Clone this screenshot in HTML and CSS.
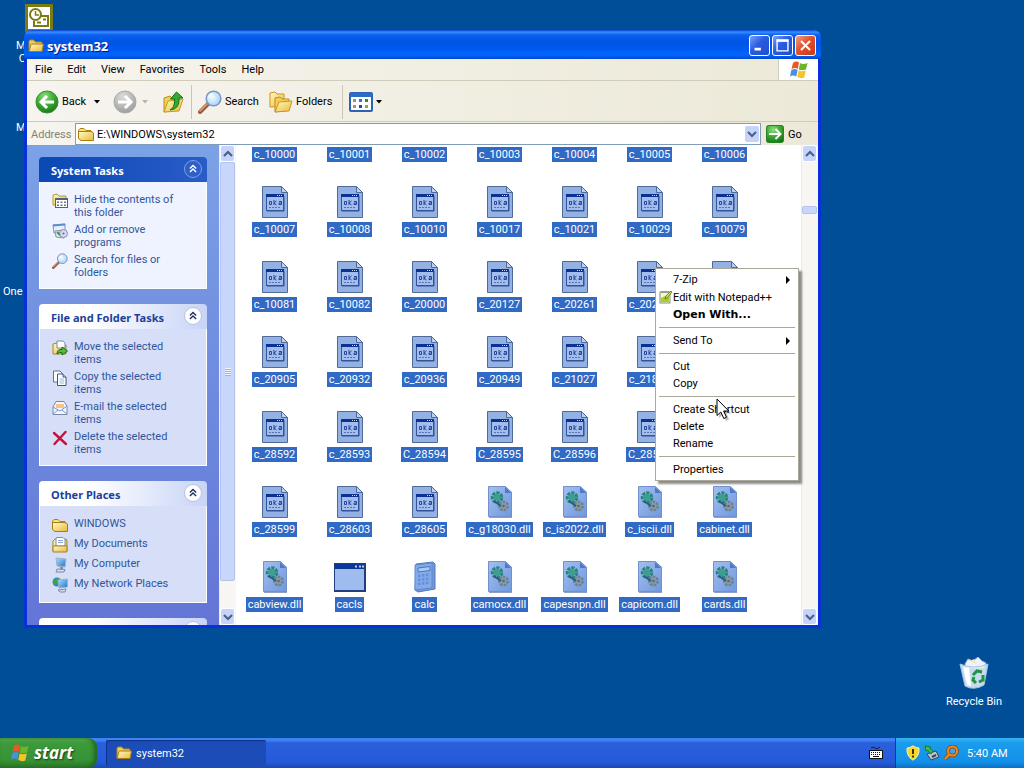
FILE: index.html
```html
<!DOCTYPE html>
<html lang="en">
<head>
  <meta charset="utf-8">
  <title>system32</title>
  <link rel="stylesheet" href="styles.css">
</head>
<body>
  <svg class="symbols" aria-hidden="true">
    <defs>
      <linearGradient id="gold" x1="0" y1="0" x2="1" y2="1">
        <stop offset="0" stop-color="#fffbc4"/>
        <stop offset="1" stop-color="#e9b93a"/>
      </linearGradient>
      <linearGradient id="page" x1="0" y1="0" x2="1" y2="1">
        <stop offset="0" stop-color="#a3bff0"/>
        <stop offset="1" stop-color="#6f98de"/>
      </linearGradient>
      <linearGradient id="screen" x1="0" y1="0" x2="1" y2="1">
        <stop offset="0" stop-color="#a5e4ff"/>
        <stop offset="1" stop-color="#2272c8"/>
      </linearGradient>
      <radialGradient id="green" cx=".4" cy=".25" r=".8">
        <stop offset="0" stop-color="#8fe07c"/>
        <stop offset=".5" stop-color="#3cab35"/>
        <stop offset="1" stop-color="#167414"/>
      </radialGradient>
      <radialGradient id="grey" cx=".4" cy=".25" r=".8">
        <stop offset="0" stop-color="#dcdcdc"/>
        <stop offset="1" stop-color="#9b9b9b"/>
      </radialGradient>
      <radialGradient id="lens" cx=".4" cy=".4" r=".7">
        <stop offset="0" stop-color="#f2fbff"/>
        <stop offset="1" stop-color="#a2cdf4"/>
      </radialGradient>
    </defs>
    <symbol id="i-folder" viewBox="0 0 16 16">
      <path d="M1 13V3.500Q1 2 2.500 2H5.500L7.500 4H13Q14 4 14 5V13Z" fill="#f0cd55" stroke="#b3861c"/>
      <path d="M1 13.500L3 6.500Q3.200 6 4 6H15.500L14 13.500Z" fill="url(#gold)" stroke="#a87b14"/>
    </symbol>
    <symbol id="i-folder-closed" viewBox="0 0 16 16">
      <path d="M.5 12V4L2 2.500H6L8 4.500H13L14 6" fill="#f7df7c" stroke="#b3861c"/>
      <path d="M.5 5.500H13L15.500 7V14.500H3L.5 12.500Z" fill="url(#gold)" stroke="#a87b14"/>
    </symbol>
    <symbol id="i-flag" viewBox="0 0 20 20">
      <path d="M4 3Q7 0.500 10 2.500L8.800 9Q6 7 2.500 9Z" fill="#e8592a"/>
      <path d="M11 3Q14 5 18.500 3L17 9.500Q13 11 9.800 9.500Z" fill="#6cb52c"/>
      <path d="M2.300 10Q6 8 8.600 10L7.300 16.500Q4 14.500 1 16.500Z" fill="#4b8fe0"/>
      <path d="M9.600 10.500Q13 12 16.800 10.500L15.300 17.500Q12 19 8.300 17Z" fill="#f6c32d"/>
    </symbol>
    <symbol id="i-back" viewBox="0 0 24 24">
      <circle cx="12" cy="12" r="11" fill="url(#green)" stroke="#3d8b38"/>
      <path d="M19 12H6M12 6L6 12L12 18" fill="none" stroke="#fff" stroke-width="3"/>
    </symbol>
    <symbol id="i-forward" viewBox="0 0 24 24">
      <circle cx="12" cy="12" r="11" fill="url(#grey)" stroke="#a9a9a9"/>
      <path d="M5 12H18M12 6L18 12L12 18" fill="none" stroke="#fff" stroke-width="3"/>
    </symbol>
    <symbol id="i-up" viewBox="0 0 24 24">
      <path d="M3 8L9 6L11 8L18 6V20L3 22Z" fill="#f3cf56" stroke="#b98d22"/>
      <path d="M3 22L7 11L22 9L18 21Z" fill="url(#gold)" stroke="#c89a28"/>
      <path d="M9 20Q14 18 13.500 9H9.500L15.500 2L22 8H18Q19 19 9 20Z" fill="#36a935" stroke="#176e19"/>
    </symbol>
    <symbol id="i-search" viewBox="0 0 24 24">
      <path d="M2 22L10 14" stroke="#9a5a3a" stroke-width="4" stroke-linecap="round"/>
      <path d="M2 21L9 14" stroke="#e2a37f" stroke-width="1.500" stroke-linecap="round"/>
      <circle cx="15.500" cy="8.500" r="7.300" fill="url(#lens)" stroke="#7a96c4" stroke-width="1.500"/>
      <path d="M11 8Q11.500 4.500 15 4" fill="none" stroke="#fff" stroke-width="1.500"/>
    </symbol>
    <symbol id="i-folders" viewBox="0 0 24 24">
      <path d="M1 17V3L6 2L8 4H15V16Z" fill="url(#gold)" stroke="#d08f23"/>
      <path d="M6 22V8L11 7L13 9H20V20Z" fill="#f4cd52" stroke="#c48a1e"/>
      <path d="M6 22L10 12L23 11L20 21Z" fill="url(#gold)" stroke="#c99429"/>
    </symbol>
    <symbol id="i-views" viewBox="0 0 24 20">
      <rect x="1" y="1" width="22" height="18" rx="1" fill="#fff" stroke="#2c63b4" stroke-width="2"/>
      <path d="M1 3H23" stroke="#2a6cc8" stroke-width="4"/>
      <path d="M4 7H7V10H4Z" fill="#8a94a8"/><path d="M10 7H13V10H10Z" fill="#3f6fbe"/><path d="M16 7H19V10H16Z" fill="#2e8b3a"/>
      <path d="M4 13H7V16H4Z" fill="#e0747c"/><path d="M10 13H13V16H10Z" fill="#1f4fa8"/><path d="M16 13H19V16H16Z" fill="#98a82c"/>
    </symbol>
    <symbol id="i-go" viewBox="0 0 18 18">
      <rect x=".5" y=".5" width="17" height="17" rx="2" fill="url(#green)" stroke="#2b8128"/>
      <path d="M3 9H14M9.500 4L14.500 9L9.500 14" fill="none" stroke="#fff" stroke-width="2"/>
    </symbol>
    <symbol id="i-down" viewBox="0 0 10 8">
      <path d="M1 2L5 6L9 2" fill="none" stroke="#4d6185" stroke-width="2.200"/>
    </symbol>
    <symbol id="i-up-chevron" viewBox="0 0 10 8">
      <path d="M1 6L5 2L9 6" fill="none" stroke="#4d6185" stroke-width="2.200"/>
    </symbol>
    <symbol id="i-collapse" viewBox="0 0 18 18">
      <path d="M5.500 8.500L9 5L12.500 8.500M5.500 12.500L9 9L12.500 12.500" fill="none" stroke="currentColor" stroke-width="1.600"/>
    </symbol>
    <symbol id="i-caret" viewBox="0 0 6 4"><path d="M0 0H6L3 3.500Z" fill="currentColor"/></symbol>
    <symbol id="i-hide" viewBox="0 0 16 16">
      <path d="M1 12V2L5 1L7 3H14V12Z" fill="url(#gold)" stroke="#b39b3a"/>
      <rect x="3.500" y="5.500" width="12" height="9" fill="#fff" stroke="#56607a"/>
      <path d="M3 6H16" stroke="#56607a" stroke-width="2"/>
      <path d="M6 8.500V10M9.500 8.500V10M13 8.500V10M6 11.500V13M9.500 11.500V13M13 11.500V13" stroke="#6a748c" stroke-width="2"/>
    </symbol>
    <symbol id="i-programs" viewBox="0 0 16 16">
      <path d="M1 2L13 1V8L2 10Z" fill="#e8eefa" stroke="#7b93c0"/>
      <path d="M1 2.500L13 1.500" stroke="#5b8fd0" stroke-width="2"/>
      <path d="M3 8L12 7V15L4 14Z" fill="#dfe6f2" stroke="#8794ac"/>
      <circle cx="11.500" cy="10.500" r="4" fill="#dcd6f2" stroke="#8d8fb5"/><circle cx="11.500" cy="10.500" r="1" fill="#667"/>
      <path d="M5 9L8 12" stroke="#3c9c4c" stroke-width="2"/>
    </symbol>
    <symbol id="i-move" viewBox="0 0 16 16">
      <path d="M1 14V4L5 3L7 5H14V14Z" fill="url(#gold)" stroke="#a3852b"/>
      <path d="M5 1H11L13 3V8H5Z" fill="#fff" stroke="#7d8cac"/>
      <path d="M5 14Q5 9 10 9.500V7L15.500 11L10 15V12.500Q7 12 5 14Z" fill="#54bd3c" stroke="#1c6c18"/>
    </symbol>
    <symbol id="i-copy" viewBox="0 0 16 16">
      <path d="M1.500 1H8L10 3V12H1.500Z" fill="#fff" stroke="#5b7196"/>
      <path d="M5.500 4H11L14 7V15.500H5.500Z" fill="#fff" stroke="#3a5884"/>
      <path d="M11 4V7H14" fill="#c9d8ee" stroke="#3a5884"/>
      <path d="M7.500 9H12M7.500 11H12M7.500 13H12" stroke="#9fb4d4"/>
    </symbol>
    <symbol id="i-mail" viewBox="0 0 16 16">
      <path d="M1 7L4 1.500H12L15 6V14.500H1Z" fill="#f3f6fd" stroke="#7b88a8"/>
      <path d="M4 4H12V8H4Z" fill="#f4c48a"/>
      <path d="M1 7L8 11L15 6M1 14L6 10M15 14L10 10" fill="none" stroke="#7f97c4"/>
    </symbol>
    <symbol id="i-delete" viewBox="0 0 16 16">
      <path d="M2 3L14 14M13.500 2L2.500 14" stroke="#c0143c" stroke-width="2.400" stroke-linecap="round"/>
    </symbol>
    <symbol id="i-documents" viewBox="0 0 16 16">
      <path d="M1 14V4L3 2H14L15 4V14Z" fill="url(#gold)" stroke="#a3852b"/>
      <path d="M5 .5H11L13 2.500V9H4V1Z" fill="#fff" stroke="#7d8cac"/>
      <path d="M6 3.500H11M6 5.500H11" stroke="#8fa8d0"/>
      <path d="M1 15V9H15V15Z" fill="url(#gold)" stroke="#a3852b"/>
    </symbol>
    <symbol id="i-computer" viewBox="0 0 16 16">
      <path d="M4 1L14 2L13 10L5 9Z" fill="url(#screen)" stroke="#9eb0cc"/>
      <path d="M8 10H11V12H8Z" fill="#8191b4"/>
      <path d="M5 12L13 12.500L12 15H4Z" fill="#d5dcea" stroke="#7d8aa8"/>
    </symbol>
    <symbol id="i-network" viewBox="0 0 16 16">
      <circle cx="5" cy="5" r="4.500" fill="#2f88c8"/>
      <path d="M1 4Q4 1 7 1L5 6L2 8Z" fill="#3da447"/>
      <path d="M6 3L15.500 2V10L7 11Z" fill="url(#screen)" stroke="#9eb0cc"/>
      <path d="M6 13L14 12L13 15H8Z" fill="#d5dcea" stroke="#7d8aa8"/>
    </symbol>
    <symbol id="i-nls" viewBox="0 0 32 32">
      <path d="M3.500 .5H22.500L28.500 6.500V31.500H3.500Z" fill="#94b1e4" stroke="#4f6a98"/>
      <path d="M22.500 .5V6.500H28.500Z" fill="#bccfee" stroke="#4f6a98"/>
      <rect x="7.500" y="8.500" width="17" height="16" fill="#a3bdec" stroke="#34559a"/>
      <path d="M7 9.500H25" stroke="#0b3292" stroke-width="3"/>
      <path d="M18 9.500H19M20 9.500H21M22 9.500H23" stroke="#cfdcf7"/>
      <path d="M25 10V25H8" fill="none" stroke="#34559a"/>
      <path d="M10.500 15.500H12.500V18.500H10.500ZM15 14V19M17.500 15L15 17L17.500 19M20 15.500H22.500V18.500H20V17H22" fill="none" stroke="#27459a"/>
      <path d="M10 21.500H22" stroke="#5674b4" stroke-dasharray="2 1"/>
    </symbol>
    <symbol id="i-dll" viewBox="0 0 32 32">
      <path d="M5 1H22L28 6V32H5Z" fill="#8fa0c4"/>
      <path d="M4.500 .5H21.500L27.500 6.500V30.500H4.500Z" fill="url(#page)" stroke="#7290cc"/>
      <path d="M21 1V7H27Z" fill="#4f79c8"/>
      <circle cx="13" cy="11.500" r="4.500" fill="none" stroke="#26857d" stroke-width="3.500" stroke-dasharray="3 1"/>
      <circle cx="13" cy="11.500" r="3.500" fill="#3e9f90"/>
      <circle cx="19.500" cy="20" r="4" fill="none" stroke="#6e8288" stroke-width="3" stroke-dasharray="2.500 1"/>
      <circle cx="19.500" cy="20" r="3" fill="#8b9a96"/>
      <circle cx="19.500" cy="20" r="1.300" fill="#4c66a6"/>
      <path d="M10 15L17 20" stroke="#285c80" stroke-width="2"/>
    </symbol>
    <symbol id="i-exe" viewBox="0 0 32 32">
      <rect x=".5" y="2.500" width="31" height="28" fill="#9fbcee" stroke="#1f3f80"/>
      <path d="M1 5.500H31" stroke="#0b3799" stroke-width="5"/>
      <path d="M21 5.500H23M25 5.500H27M28 5.500H30" stroke="#b7ccf3" stroke-width="2"/>
      <path d="M31 3V30H1" fill="none" stroke="#1f3f80" stroke-width="2"/>
    </symbol>
    <symbol id="i-calc" viewBox="0 0 32 32">
      <path d="M7 3L24 1L26 3V28L9 31L6 29Z" fill="#7598d8" stroke="#4f78c4"/>
      <path d="M6 4L23 2V27L6 29Z" fill="#84abe9" stroke="#5f88d2"/>
      <path d="M9 7L21 5.500V9.500L9 11Z" fill="#a9c8f5" stroke="#4b74c0"/>
      <path d="M9 15L21 13.500M9 19L21 17.500M9 23L21 21.500" stroke="#6490da" stroke-width="2.500" stroke-dasharray="2.500 1.500"/>
    </symbol>
    <symbol id="i-bin" viewBox="0 0 32 32">
      <path d="M7 7L10 2L15 4L20 0L24 4L28 6L26 11L8 11Z" fill="#eef2fb" stroke="#9fb4da"/>
      <path d="M12 4L16 2L19 7Z" fill="#fbe3b8"/>
      <path d="M2 7Q15 13 30 7L26 28Q16 34 7 29Z" fill="#dcebf7" fill-opacity=".9" stroke="#a9c6dd"/>
      <path d="M5 10L9 28L13 29L11 11Z" fill="#fff"/>
      <path d="M15 18L19 14L24 15M25 18V23L21 25M18 26L15 23L16 20" fill="none" stroke="#1f9440" stroke-width="3"/>
    </symbol>
    <symbol id="i-outlook" viewBox="0 0 28 28">
      <rect x="1.500" y="1.500" width="25" height="25" fill="#fff" stroke="#7c7a12" stroke-width="3"/>
      <circle cx="10.500" cy="10.500" r="5.500" fill="#fff" stroke="#7c7a12" stroke-width="2"/>
      <path d="M10.500 7V11H14" fill="none" stroke="#7c7a12" stroke-width="1.500"/>
      <path d="M15 12H23V22H9V17" fill="none" stroke="#7c7a12" stroke-width="2"/>
      <path d="M12 18.500H16M18 15.500H21" stroke="#7c7a12" stroke-width="2"/>
    </symbol>
    <symbol id="i-notepad" viewBox="0 0 14 14">
      <rect x="1" y="2" width="10" height="11" fill="#f2f7d8" stroke="#8a9070"/>
      <path d="M2 12V8L10 4V12Z" fill="#a8cf2c"/>
      <path d="M3 1V3M5 1V3M7 1V3M9 1V3" stroke="#777"/>
      <path d="M6 9L7 6L12 1L13 2L8 8Z" fill="#d9e86a" stroke="#4c5a18" stroke-width=".7"/>
    </symbol>
    <symbol id="i-keyboard" viewBox="0 0 14 14">
      <path d="M2 2Q4 0 6 2T11 1" fill="none" stroke="#0b1d50"/>
      <rect x=".5" y="4.500" width="13" height="8" fill="#fff" stroke="#111"/>
      <path d="M2 6.500H12M2 8.500H12" stroke="#111" stroke-dasharray="1 1"/>
      <path d="M4 10.500H10" stroke="#111"/>
    </symbol>
    <symbol id="i-shield" viewBox="0 0 14 16">
      <path d="M7 .8Q10 3 13 3Q14 11 7 15.200Q0 11 1 3Q4 3 7 .8Z" fill="#f8d72c" stroke="#e9ecc8"/>
      <path d="M7 4V9M7 10.500V12.500" stroke="#3b3200" stroke-width="2"/>
    </symbol>
    <symbol id="i-eject" viewBox="0 0 16 16">
      <path d="M3 9L12 6L15 12L7 15Z" fill="#b9c4d0" stroke="#35465c"/>
      <path d="M8 12L12 10" stroke="#35465c" stroke-width="2"/>
      <path d="M2 6L1 1L7 2L5.500 3.500L9 6L7 9L3.500 5Z" fill="#3fc04a" stroke="#1a7b2a"/>
    </symbol>
    <symbol id="i-finder" viewBox="0 0 16 16">
      <circle cx="9.500" cy="6" r="4.500" fill="#4aa0dc" stroke="#8e4209" stroke-width="3.400"/>
      <path d="M6 9.500L2 14" stroke="#8e4209" stroke-width="4"/>
      <circle cx="9.500" cy="6" r="4.500" fill="none" stroke="#f08b22" stroke-width="2"/>
      <path d="M6 9.500L2 14" stroke="#f08b22" stroke-width="2.400"/>
    </symbol>
  </svg>

  <main class="desktop">
    <div class="shortcut outlook">
      <svg class="shortcut-icon"><use href="#i-outlook"/></svg>
    </div>
    <div class="hidden-label label-mail">M<br>&nbsp;O</div>
    <div class="hidden-label label-music">M</div>
    <div class="hidden-label label-note">One</div>

    <a class="recycle-bin" href="#">
      <svg><use href="#i-bin"/></svg>
      <span>Recycle Bin</span>
    </a>

    <section class="window">
      <header class="title-bar">
        <svg class="icon-16"><use href="#i-folder"/></svg>
        <h1>system32</h1>
        <div class="window-buttons">
          <button class="window-btn" aria-label="Minimize">
            <svg viewBox="0 0 21 21"><path d="M5 14.500H12" stroke="#fff" stroke-width="3"/></svg>
          </button>
          <button class="window-btn" aria-label="Maximize">
            <svg viewBox="0 0 21 21"><path d="M4.500 4V16.500H16.500V4" fill="none" stroke="#fff" stroke-width="1.500"/><path d="M4 5H17" stroke="#fff" stroke-width="3"/></svg>
          </button>
          <button class="window-btn close" aria-label="Close">
            <svg viewBox="0 0 21 21"><path d="M5.500 5.500L15.500 15.500M15.500 5.500L5.500 15.500" stroke="#fff" stroke-width="2.200"/></svg>
          </button>
        </div>
      </header>

      <nav class="menu-bar">
        <button>File</button>
        <button>Edit</button>
        <button>View</button>
        <button>Favorites</button>
        <button>Tools</button>
        <button>Help</button>
        <div class="brand"><svg><use href="#i-flag"/></svg></div>
      </nav>

      <div class="toolbar">
        <button class="tool back"><svg class="icon-24"><use href="#i-back"/></svg>Back</button>
        <button class="drop" aria-label="Back history"><svg><use href="#i-caret"/></svg></button>
        <button class="tool forward" aria-label="Forward" disabled><svg class="icon-24"><use href="#i-forward"/></svg></button>
        <button class="drop" aria-label="Forward history" disabled><svg><use href="#i-caret"/></svg></button>
        <button class="tool up" aria-label="Up"><svg class="icon-24"><use href="#i-up"/></svg></button>
        <span class="divider"></span>
        <button class="tool search"><svg class="icon-24"><use href="#i-search"/></svg>Search</button>
        <button class="tool folders"><svg class="icon-24"><use href="#i-folders"/></svg>Folders</button>
        <span class="divider"></span>
        <button class="tool views" aria-label="Views"><svg class="icon-24"><use href="#i-views"/></svg><svg class="caret"><use href="#i-caret"/></svg></button>
      </div>

      <form class="address-bar">
        <label for="address">Address</label>
        <div class="address-box">
          <svg class="icon-16"><use href="#i-folder-closed"/></svg>
          <input type="text" id="address" value="E:\WINDOWS\system32">
          <button type="button" class="scroll-btn" aria-label="Address list"><svg><use href="#i-down"/></svg></button>
        </div>
        <button type="button" class="go"><svg><use href="#i-go"/></svg>Go</button>
      </form>

      <div class="content">
        <aside class="side">
          <section class="panel primary">
            <h2>System Tasks <button class="collapse" aria-label="Collapse"><svg><use href="#i-collapse"/></svg></button></h2>
            <ul>
              <li><svg class="icon-16"><use href="#i-hide"/></svg><a href="#">Hide the contents of<br>this folder</a></li>
              <li><svg class="icon-16"><use href="#i-programs"/></svg><a href="#">Add or remove<br>programs</a></li>
              <li><svg class="icon-16"><use href="#i-search"/></svg><a href="#">Search for files or<br>folders</a></li>
            </ul>
          </section>
          <section class="panel">
            <h2>File and Folder Tasks <button class="collapse" aria-label="Collapse"><svg><use href="#i-collapse"/></svg></button></h2>
            <ul>
              <li><svg class="icon-16"><use href="#i-move"/></svg><a href="#">Move the selected<br>items</a></li>
              <li><svg class="icon-16"><use href="#i-copy"/></svg><a href="#">Copy the selected<br>items</a></li>
              <li><svg class="icon-16"><use href="#i-mail"/></svg><a href="#">E-mail the selected<br>items</a></li>
              <li><svg class="icon-16"><use href="#i-delete"/></svg><a href="#">Delete the selected<br>items</a></li>
            </ul>
          </section>
          <section class="panel">
            <h2>Other Places <button class="collapse" aria-label="Collapse"><svg><use href="#i-collapse"/></svg></button></h2>
            <ul>
              <li><svg class="icon-16"><use href="#i-folder-closed"/></svg><a href="#">WINDOWS</a></li>
              <li><svg class="icon-16"><use href="#i-documents"/></svg><a href="#">My Documents</a></li>
              <li><svg class="icon-16"><use href="#i-computer"/></svg><a href="#">My Computer</a></li>
              <li><svg class="icon-16"><use href="#i-network"/></svg><a href="#">My Network Places</a></li>
            </ul>
          </section>
          <section class="panel">
            <h2><button class="collapse" aria-label="Collapse"><svg><use href="#i-collapse"/></svg></button></h2>
          </section>
        </aside>

        <div class="scrollbar side-scroll">
          <button class="scroll-btn" aria-label="Scroll up"><svg><use href="#i-up-chevron"/></svg></button>
          <div class="track"><div class="thumb"><span class="grip"></span></div></div>
          <button class="scroll-btn" aria-label="Scroll down"><svg><use href="#i-down"/></svg></button>
        </div>

        <div class="files">
          <ul class="file-grid">
            <li><svg><use href="#i-nls"/></svg><span>c_10000</span></li>
            <li><svg><use href="#i-nls"/></svg><span>c_10001</span></li>
            <li><svg><use href="#i-nls"/></svg><span>c_10002</span></li>
            <li><svg><use href="#i-nls"/></svg><span>c_10003</span></li>
            <li><svg><use href="#i-nls"/></svg><span>c_10004</span></li>
            <li><svg><use href="#i-nls"/></svg><span>c_10005</span></li>
            <li><svg><use href="#i-nls"/></svg><span>c_10006</span></li>

            <li><svg><use href="#i-nls"/></svg><span>c_10007</span></li>
            <li><svg><use href="#i-nls"/></svg><span>c_10008</span></li>
            <li><svg><use href="#i-nls"/></svg><span>c_10010</span></li>
            <li><svg><use href="#i-nls"/></svg><span>c_10017</span></li>
            <li><svg><use href="#i-nls"/></svg><span>c_10021</span></li>
            <li><svg><use href="#i-nls"/></svg><span>c_10029</span></li>
            <li><svg><use href="#i-nls"/></svg><span>c_10079</span></li>

            <li><svg><use href="#i-nls"/></svg><span>c_10081</span></li>
            <li><svg><use href="#i-nls"/></svg><span>c_10082</span></li>
            <li><svg><use href="#i-nls"/></svg><span>c_20000</span></li>
            <li><svg><use href="#i-nls"/></svg><span>c_20127</span></li>
            <li><svg><use href="#i-nls"/></svg><span>c_20261</span></li>
            <li><svg><use href="#i-nls"/></svg><span>c_20269</span></li>
            <li><svg><use href="#i-nls"/></svg></li>

            <li><svg><use href="#i-nls"/></svg><span>c_20905</span></li>
            <li><svg><use href="#i-nls"/></svg><span>c_20932</span></li>
            <li><svg><use href="#i-nls"/></svg><span>c_20936</span></li>
            <li><svg><use href="#i-nls"/></svg><span>c_20949</span></li>
            <li><svg><use href="#i-nls"/></svg><span>c_21027</span></li>
            <li><svg><use href="#i-nls"/></svg><span>c_21866</span></li>
            <li></li>

            <li><svg><use href="#i-nls"/></svg><span>c_28592</span></li>
            <li><svg><use href="#i-nls"/></svg><span>c_28593</span></li>
            <li><svg><use href="#i-nls"/></svg><span>C_28594</span></li>
            <li><svg><use href="#i-nls"/></svg><span>C_28595</span></li>
            <li><svg><use href="#i-nls"/></svg><span>C_28596</span></li>
            <li><svg><use href="#i-nls"/></svg><span>C_28597</span></li>
            <li></li>

            <li><svg><use href="#i-nls"/></svg><span>c_28599</span></li>
            <li><svg><use href="#i-nls"/></svg><span>c_28603</span></li>
            <li><svg><use href="#i-nls"/></svg><span>c_28605</span></li>
            <li><svg><use href="#i-dll"/></svg><span>c_g18030.dll</span></li>
            <li><svg><use href="#i-dll"/></svg><span>c_is2022.dll</span></li>
            <li><svg><use href="#i-dll"/></svg><span>c_iscii.dll</span></li>
            <li><svg><use href="#i-dll"/></svg><span>cabinet.dll</span></li>

            <li><svg><use href="#i-dll"/></svg><span>cabview.dll</span></li>
            <li><svg><use href="#i-exe"/></svg><span>cacls</span></li>
            <li><svg><use href="#i-calc"/></svg><span>calc</span></li>
            <li><svg><use href="#i-dll"/></svg><span>camocx.dll</span></li>
            <li><svg><use href="#i-dll"/></svg><span>capesnpn.dll</span></li>
            <li><svg><use href="#i-dll"/></svg><span>capicom.dll</span></li>
            <li><svg><use href="#i-dll"/></svg><span>cards.dll</span></li>
          </ul>
        </div>

        <div class="scrollbar file-scroll">
          <button class="scroll-btn" aria-label="Scroll up"><svg><use href="#i-up-chevron"/></svg></button>
          <div class="track"><div class="thumb"></div></div>
          <button class="scroll-btn" aria-label="Scroll down"><svg><use href="#i-down"/></svg></button>
        </div>
      </div>
    </section>

    <div class="context-menu" role="menu">
      <button role="menuitem" class="submenu">7-Zip</button>
      <button role="menuitem" class="with-icon"><svg><use href="#i-notepad"/></svg>Edit with Notepad++</button>
      <button role="menuitem" class="default">Open With...</button>
      <hr>
      <button role="menuitem" class="submenu">Send To</button>
      <hr>
      <button role="menuitem">Cut</button>
      <button role="menuitem">Copy</button>
      <hr>
      <button role="menuitem">Create Shortcut</button>
      <button role="menuitem">Delete</button>
      <button role="menuitem">Rename</button>
      <hr>
      <button role="menuitem">Properties</button>
    </div>

    <svg class="cursor" viewBox="0 0 16 24">
      <path d="M3 3V20L7 16.500L10 23L13 21.500L10.500 15.500H15.500Z" fill="#000" fill-opacity=".25"/>
      <path d="M1 1V17.500L4.800 14L7.800 20.500L10.500 19.300L7.600 13H12.800Z" fill="#fff" stroke="#000"/>
    </svg>
  </main>

  <footer class="taskbar">
    <button class="start"><svg><use href="#i-flag"/></svg>start</button>
    <button class="task"><svg class="icon-16"><use href="#i-folder"/></svg>system32</button>
    <div class="language"><svg><use href="#i-keyboard"/></svg></div>
    <div class="tray">
      <svg class="icon-16"><use href="#i-shield"/></svg>
      <svg class="icon-16"><use href="#i-eject"/></svg>
      <svg class="icon-16"><use href="#i-finder"/></svg>
      <time>5:40 AM</time>
    </div>
  </footer>
</body>
</html>
```
FILE: styles.css
```css
* {
  box-sizing: border-box;
}

body {
  height: 100vh;
  margin: 0;
  display: flex;
  flex-direction: column;
  overflow: hidden;
  font-family: Roboto, "Liberation Sans", sans-serif;
  font-size: 11px;
  line-height: 13px;
  color: #000;
  background: #004e98;
}

button {
  padding: 0;
  border: none;
  background: none;
  font: inherit;
  color: inherit;
}

svg {
  display: block;
  flex: none;
}

ul {
  list-style: none;
  margin: 0;
  padding: 0;
}

a {
  text-decoration: none;
}

.symbols {
  position: absolute;
  width: 0;
  height: 0;
}

.icon-16 {
  width: 16px;
  height: 16px;
}

.icon-24 {
  width: 24px;
  height: 24px;
}

/* desktop */
.desktop {
  position: relative;
  flex: 1;
  color: #fff;
}

.outlook {
  position: absolute;
  left: 25px;
  top: 4px;
}

.shortcut-icon {
  width: 28px;
  height: 28px;
}

.hidden-label {
  position: absolute;
  left: 16px;
}

.label-mail {
  top: 39px;
}

.label-music {
  top: 121px;
}

.label-note {
  left: 3px;
  top: 285px;
}

.recycle-bin {
  position: absolute;
  right: 16px;
  bottom: 30px;
  width: 68px;
  display: flex;
  flex-direction: column;
  align-items: center;
  gap: 6px;
  color: #fff;
  white-space: nowrap;
}

.recycle-bin svg {
  width: 32px;
  height: 32px;
}

/* explorer window */
.window {
  position: absolute;
  left: 24px;
  right: 203px;
  top: 30px;
  bottom: 110px;
  display: flex;
  flex-direction: column;
  border: 3px solid #0831d9;
  border-top: none;
  border-radius: 7px 7px 0 0;
  background: #ece9d8;
  color: #000;
}

.title-bar {
  height: 29px;
  margin: 0 -3px;
  padding: 2px 5px 0 4px;
  display: flex;
  align-items: center;
  gap: 3px;
  border-radius: 7px 7px 0 0;
  background: linear-gradient(#0a3fcd 0, #3a8cff 2px, #0a60f0 5px, #0054e3 12px, #0058ee 18px, #0066ff 25px, #0047cc 29px);
}

.title-bar h1 {
  flex: 1;
  margin: 0;
  font-family: "Open Sans", "Noto Sans", sans-serif;
  font-size: 13px;
  font-weight: 700;
  line-height: 16px;
  color: #fff;
  text-shadow: 1px 1px #0a1883;
}

.window-buttons {
  display: flex;
  gap: 2px;
}

.window-btn {
  width: 21px;
  height: 21px;
  border: 1px solid #fff;
  border-radius: 3px;
  background: linear-gradient(135deg, #7d9ff5, #2a5be0 45%, #1f4fd0);
}

.window-btn svg {
  width: 19px;
  height: 19px;
}

.window-btn.close {
  background: linear-gradient(135deg, #f0a088, #e0512e 45%, #c63a16);
}

.menu-bar {
  height: 22px;
  padding-left: 8px;
  display: flex;
  align-items: center;
  gap: 15px;
  border-bottom: 1px solid #d0ccba;
  background: linear-gradient(90deg, #f6f4ee, #ece9d8);
}

.brand {
  align-self: stretch;
  width: 40px;
  margin-left: auto;
  display: flex;
  align-items: center;
  justify-content: center;
  border-left: 1px solid #d0ccba;
  background: #fff;
}

.brand svg {
  width: 20px;
  height: 20px;
}

.toolbar {
  height: 41px;
  padding: 1px 0 0 8px;
  display: flex;
  align-items: center;
  border-bottom: 1px solid #d0ccba;
  background: linear-gradient(90deg, #f6f4ee, #ece9d8);
}

.tool {
  display: flex;
  align-items: center;
  gap: 3px;
}

.drop {
  width: 16px;
  height: 24px;
  display: flex;
  align-items: center;
  justify-content: center;
}

.drop svg,
.caret {
  width: 6px;
  height: 4px;
}

.drop:disabled {
  color: #b8b5a5;
}

.back {
  width: 54px;
}

.forward {
  margin-left: 8px;
}

.up {
  margin-left: 8px;
}

.divider {
  width: 1px;
  height: 34px;
  margin: 0 6px;
  background: #cac6b4;
}

.search {
  width: 62px;
}

.folders {
  width: 64px;
  margin: 0 3px 0 9px;
}

.address-bar {
  height: 23px;
  padding: 1px 14px 0 4px;
  display: flex;
  align-items: center;
  background: linear-gradient(90deg, #f6f4ee, #ece9d8);
}

.address-bar label {
  width: 44px;
  color: #85826f;
}

.address-box {
  flex: 1;
  height: 22px;
  padding: 1px 0 1px 2px;
  display: flex;
  align-items: center;
  gap: 3px;
  border: 1px solid #7f9db9;
  background: #fff;
}

.address-box input {
  flex: 1;
  min-width: 0;
  padding: 0;
  border: none;
  outline: none;
  font: inherit;
  color: #000;
}

.go {
  width: 38px;
  margin-left: 5px;
  display: flex;
  align-items: center;
  gap: 4px;
}

.go svg {
  width: 18px;
  height: 18px;
}

.content {
  flex: 1;
  min-height: 0;
  display: flex;
  background: #fff;
}

/* task panels */
.side {
  width: 192px;
  padding: 12px;
  display: flex;
  flex-direction: column;
  gap: 15px;
  overflow: hidden;
  background: linear-gradient(#7ba2e7, #6375d6);
}

.panel {
  flex: none;
}

.panel h2 {
  height: 25px;
  margin: 0;
  padding: 2px 5px 0 12px;
  display: flex;
  align-items: center;
  justify-content: space-between;
  border-radius: 4px 4px 0 0;
  font-family: "Noto Sans", "Open Sans", sans-serif;
  font-size: 11px;
  font-weight: 700;
  white-space: nowrap;
  color: #1c3f9c;
  background: linear-gradient(90deg, #fff 30%, #c8d4f7);
}

.panel.primary h2 {
  color: #fff;
  background: linear-gradient(90deg, #0a48b4, #2a5cc8);
}

.collapse {
  width: 18px;
  height: 18px;
  margin: 0 0 4px auto;
  border: 1px solid #b6c2e2;
  border-radius: 50%;
  background: #fff;
  color: #1f2f66;
}

.collapse svg {
  width: 16px;
  height: 16px;
}

.primary .collapse {
  border-color: #7d9fe2;
  background: #2d5fc8;
  color: #fff;
}

.panel ul {
  padding: 11px 12px 9px;
  display: flex;
  flex-direction: column;
  gap: 4px;
  border: 1px solid #fff;
  border-top: none;
  background: #d6dff7;
}

.panel.primary ul {
  background: #eff3ff;
}

.panel li {
  display: flex;
  gap: 6px;
  white-space: nowrap;
}

.panel a {
  color: #2f569c;
}

/* scroll bars */
.scrollbar {
  width: 17px;
  display: flex;
  flex-direction: column;
  border-left: 1px solid #eeede5;
  background: #f7f6f2;
}

.scroll-btn {
  flex: none;
  width: 16px;
  height: 17px;
  display: flex;
  align-items: center;
  justify-content: center;
  border: 1px solid #fff;
  border-radius: 3px;
  background: #c6d3fa;
}

.scroll-btn svg {
  width: 10px;
  height: 8px;
}

.address-box .scroll-btn {
  height: 18px;
}

.scrollbar .scroll-btn {
  width: 15px;
}

.track {
  flex: 1;
}

.thumb {
  width: 15px;
  display: flex;
  align-items: center;
  justify-content: center;
  border: 1px solid #b3c3ee;
  border-radius: 2px;
  background: #c8d6fb;
}

.side-scroll .thumb {
  height: 94%;
}

.file-scroll .thumb {
  height: 8px;
  margin-top: 44px;
}

.grip {
  width: 6px;
  height: 8px;
  background: repeating-linear-gradient(#eef4fe 0, #eef4fe 1px, #9fb3e6 1px, #9fb3e6 2px);
}

/* file list */
.files {
  flex: 1;
  min-width: 0;
  overflow: hidden;
}

/* first row is scrolled half out of view */
.file-grid {
  margin-top: -34px;
  padding-left: 1px;
  display: grid;
  grid-template-columns: repeat(auto-fill, 75px);
  grid-auto-rows: 75px;
}

.file-grid li {
  display: flex;
  flex-direction: column;
  align-items: center;
  gap: 4px;
}

.file-grid svg {
  width: 32px;
  height: 32px;
}

.file-grid span {
  height: 15px;
  padding: 0 2px;
  line-height: 15px;
  white-space: nowrap;
  color: #fff;
  background: #316ac5;
}

/* context menu */
.context-menu {
  position: absolute;
  left: 655px;
  top: 268px;
  width: 144px;
  padding: 2px;
  border: 1px solid #aca899;
  background: #fff;
  box-shadow: 3px 3px 2px rgba(0, 0, 0, 0.45);
  color: #000;
}

.context-menu button {
  width: 100%;
  height: 17px;
  padding-left: 15px;
  display: flex;
  align-items: center;
  white-space: nowrap;
}

.context-menu .with-icon {
  height: 18px;
  padding-left: 1px;
}

.with-icon svg {
  width: 14px;
  height: 14px;
}

.context-menu .default {
  font-family: "DejaVu Sans", sans-serif;
  font-weight: 700;
}

.submenu::after {
  content: "";
  margin: 0 6px 0 auto;
  border: 4px solid transparent;
  border-right: none;
  border-left-color: #000;
}

.context-menu hr {
  height: 1px;
  margin: 4px 1px;
  border: none;
  background: #aca899;
}

.cursor {
  position: absolute;
  left: 716px;
  top: 398px;
  width: 16px;
  height: 24px;
}

/* taskbar */
.taskbar {
  height: 30px;
  display: flex;
  align-items: center;
  color: #fff;
  background: linear-gradient(#3a80f0 0, #3f86f5 2px, #2a5fdc 5px, #245bdb 24px, #1c48b4 30px);
}

.start {
  width: 97px;
  height: 30px;
  padding-left: 10px;
  display: flex;
  align-items: center;
  gap: 4px;
  border-radius: 0 9px 9px 0;
  font-family: "Open Sans", "Noto Sans", sans-serif;
  font-size: 17px;
  font-weight: 700;
  font-style: italic;
  line-height: 20px;
  text-shadow: 1px 1px 2px #123c12;
  background: linear-gradient(#5cb35a 0, #3d9a3b 5px, #379335 22px, #2a7728 30px);
  box-shadow: inset -3px 0 4px #22661f;
}

.start svg {
  width: 20px;
  height: 20px;
}

.task {
  width: 160px;
  height: 26px;
  margin-left: 9px;
  padding-left: 10px;
  display: flex;
  align-items: center;
  gap: 4px;
  border-radius: 2px;
  background: #1c4cb8;
  box-shadow: inset 1px 1px 1px #10348a;
}

.language {
  margin: 0 12px 0 auto;
}

.language svg {
  width: 14px;
  height: 14px;
}

.tray {
  width: 129px;
  height: 30px;
  padding-left: 9px;
  display: flex;
  align-items: center;
  gap: 3px;
  border-left: 1px solid #0e3c9c;
  background: linear-gradient(#35b4f4 0, #1a9cec 5px, #1290e8 24px, #0d6fc4 30px);
}

.tray time {
  margin-left: 5px;
  white-space: nowrap;
}
```
